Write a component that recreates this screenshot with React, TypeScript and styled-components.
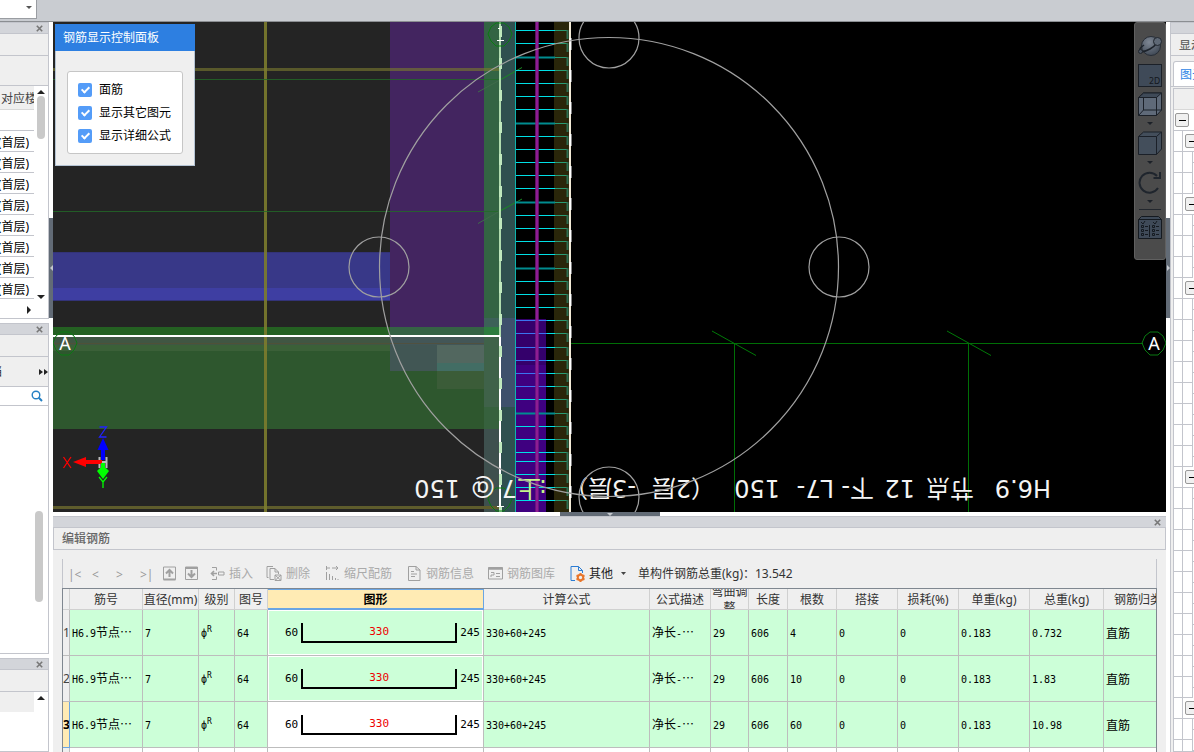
import React from "react";
import styled, { createGlobalStyle, css } from "styled-components";

const Global = createGlobalStyle`
  *, *::before, *::after { box-sizing: border-box; }
  body { margin: 0; background: #fff; }
  body, button, input, select, table {
    font: 12px/16px "Noto Sans", "Noto Sans CJK SC", sans-serif;
    color: #333;
  }
  button { border: 0; background: none; padding: 0; margin: 0; }
`;

/* ---------- frame ---------- */

const Shell = styled.div`
  display: flex;
  flex-direction: column;
  height: 100vh;
  overflow: hidden;
`;
const TopStrip = styled.header`
  flex: none;
  height: 22px;
  background: #c9ccd1;
  border-bottom: 1px solid #8b8e92;
`;
const FloorSelect = styled.select`
  display: block;
  width: 37px;
  height: 19px;
  appearance: none;
  border: 1px solid #9a9da2;
  border-width: 0 1px 1px 0;
  border-radius: 0;
  background: #fff;
`;
const SelectWrap = styled.div`
  position: relative;
  width: 37px;
  &::after {
    content: "";
    position: absolute;
    right: 5px;
    top: 6px;
    border: 3px solid transparent;
    border-top-color: #555;
    border-bottom: 0;
  }
`;
const Body = styled.div`
  flex: 1;
  min-height: 0;
  display: flex;
`;
const LeftDock = styled.aside`
  flex: none;
  width: 49px;
  display: flex;
  flex-direction: column;
  gap: 4px;
`;
const VSplit = styled.div`
  flex: none;
  width: 4px;
  padding-top: 196px;
  background: #fff;
`;
const HSplit = styled.div`
  flex: none;
  height: 4px;
  display: flex;
  justify-content: center;
  background: #fff;
`;
const Grip = styled.button<{ $flat?: boolean }>`
  display: flex;
  align-items: center;
  justify-content: center;
  width: ${(p) => (p.$flat ? "100px" : "4px")};
  height: ${(p) => (p.$flat ? "4px" : "100px")};
  background: #626b76;
`;
const Center = styled.main`
  flex: 1;
  min-width: 0;
  display: flex;
  flex-direction: column;
`;
const RightDock = styled.aside`
  flex: none;
  width: 24px;
  overflow: hidden;
  display: flex;
  flex-direction: column;
  background: #efefef;
  border-left: 1px solid #c3c5cc;
`;

/* ---------- dock panels ---------- */

const Panel = styled.section<{ $h?: number }>`
  display: flex;
  flex-direction: column;
  overflow: hidden;
  ${(p) => (p.$h ? `flex: none; height: ${p.$h}px;` : "flex: 1;")}
  border: 1px solid #c3c5cc;
  border-left: 0;
  border-top: 0;
  background: #fff;
`;
const TitleBar = styled.div`
  flex: none;
  display: flex;
  align-items: center;
  justify-content: flex-end;
  height: 12px;
  padding-right: 4px;
  background: #d3d5da;
  border: 1px solid #c3c5cc;
  border-width: 1px 0;
`;
const Strip = styled.div<{ $h: number }>`
  flex: none;
  display: flex;
  align-items: center;
  justify-content: space-between;
  height: ${(p) => p.$h}px;
  background: #efefef;
  border-bottom: 1px solid #c3c5cc;
  white-space: nowrap;
`;
const Scrolled = styled.span`
  margin-left: -10px;
`;
const Scroller = styled.div`
  flex: 1;
  min-height: 0;
  display: flex;
`;
const List = styled.ul`
  flex: none;
  width: 34px;
  margin: 0;
  padding: 0;
  list-style: none;
  overflow: hidden;
`;
const ListRow = styled.li<{ $head?: boolean }>`
  display: flex;
  justify-content: flex-end;
  align-items: center;
  height: ${(p) => (p.$head ? "24px" : "21px")};
  padding: 3px 5px 0 0;
  border-bottom: 1px solid ${(p) => (p.$head ? "#d8d8d8" : "#c3c5cc")};
  background: ${(p) => (p.$head ? "#efefef" : "#fff")};
  color: ${(p) => (p.$head ? "#444" : "#000")};
  white-space: nowrap;
  overflow: hidden;
  ${(p) => p.$head && "justify-content: flex-start; padding: 3px 0 0 1px;"}
`;
const Track = styled.div`
  flex: 1;
  display: flex;
  flex-direction: column;
  align-items: center;
  padding-top: 4px;
`;
const Thumb = styled.div<{ $h: number }>`
  width: 8px;
  height: ${(p) => p.$h}px;
  margin: 2px 0 auto;
  border-radius: 4px;
  background: #c9c9c9;
`;
const TreeTrack = styled.div`
  flex: 1;
  display: flex;
  justify-content: flex-end;
  padding: 103px 5px 0 0;
`;
const HScroll = styled.div`
  flex: none;
  height: 19px;
  padding: 7px 17px 0 0;
  display: flex;
  justify-content: flex-end;
`;
const SearchBox = styled.label`
  flex: none;
  display: flex;
  align-items: center;
  height: 19px;
  padding-right: 5px;
  border-bottom: 1px solid #c3c5cc;
`;
const SearchInput = styled.input`
  flex: 1;
  min-width: 0;
  width: 0;
  border: 0;
  outline: 0;
`;
const GreyCell = styled.div`
  width: 34px;
  height: 20px;
  background: #efefef;
`;
const CloseButton = styled.button`
  width: 9px;
  height: 9px;
  display: flex;
  align-items: center;
  justify-content: center;
`;

/* ---------- tree at the right ---------- */

const DockCaption = styled.div`
  flex: none;
  height: 22px;
  padding: 4px 0 0 8px;
  border-bottom: 1px solid #c3c5cc;
  color: #666;
  font-weight: 500;
  white-space: nowrap;
`;
const TabRow = styled.div`
  flex: none;
  height: 31px;
  padding: 5px 0 0 2px;
  border-bottom: 1px solid #c3c5cc;
`;
const Tab = styled.button`
  width: 60px;
  height: 25px;
  padding: 2px 0 0 6px;
  text-align: left;
  background: #fff;
  border: 1px solid #c3c5cc;
  border-bottom: 0;
  border-radius: 3px 3px 0 0;
  color: #2e86e6;
`;
const Tree = styled.div`
  flex: 1;
  min-height: 0;
  overflow: hidden;
  margin: 1px 0 0 2px;
  background: #fff;
  border: 1px solid #c3c5cc;
  border-right: 0;
`;
const TreeHead = styled.div`
  height: 21px;
  background: #efefef;
  border-bottom: 1px solid #d8d8d8;
`;
const TreeRow = styled.div`
  display: flex;
  align-items: center;
  height: 21px;
  border-bottom: 1px solid #c3c5cc;
`;
const Gutter = styled.div`
  flex: none;
  width: 9px;
  height: 21px;
  border-right: 1px solid #c3c5cc;
`;
const Leaf = styled.div`
  flex: none;
  width: 4px;
  height: 21px;
  margin-left: 9px;
  border-left: 1px solid #c3c5cc;
  background: linear-gradient(#c3c5cc, #c3c5cc) 0 10px / 100% 1px no-repeat, #fff;
`;
const Toggle = styled.button<{ $root?: boolean }>`
  flex: none;
  width: 14px;
  height: 14px;
  margin-left: ${(p) => (p.$root ? "1px" : "2px")};
  display: flex;
  align-items: center;
  justify-content: center;
  border: 1px solid #999;
  border-radius: 2px;
  background: #f0f0f0;
  &::after {
    content: "";
    width: 7px;
    height: 1px;
    background: #000;
  }
`;

/* ---------- viewport ---------- */

const Viewport = styled.div`
  flex: 1;
  min-height: 0;
  position: relative;
  overflow: hidden;
  background: #000;
`;
const Scene = styled.svg`
  position: absolute;
  inset: 0;
  width: 100%;
  height: 100%;
`;
const FloatPanel = styled.section`
  position: absolute;
  left: 2px;
  top: 2px;
  width: 140px;
  background: #efefef;
  border: 1px solid #b4c3d3;
  border-top: 0;
`;
const FloatTitle = styled.h2`
  margin: 0 -1px;
  padding: 6px 8px 5px;
  background: #2d7fe1;
  color: #fff;
  font-size: 12px;
  line-height: 16px;
  font-weight: 400;
`;
const CheckGroup = styled.div`
  display: flex;
  flex-direction: column;
  gap: 7px;
  margin: 20px 11px 11px;
  padding: 10px 10px 9px;
  background: #fff;
  border: 1px solid #c6c6c6;
  border-radius: 3px;
`;
const CheckLabel = styled.label`
  display: flex;
  align-items: center;
  gap: 7px;
  color: #000;
  white-space: nowrap;
`;
const Check = styled.input`
  appearance: none;
  width: 14px;
  height: 14px;
  margin: 0;
  border-radius: 2px;
  background: #549cf8;
  display: grid;
  place-items: center;
  &:checked::after {
    content: "";
    width: 5px;
    height: 8px;
    margin-bottom: 2px;
    border: solid #fff;
    border-width: 0 2px 2px 0;
    transform: rotate(45deg);
  }
`;
const ViewTools = styled.nav`
  position: absolute;
  right: 0;
  top: 0;
  width: 32px;
  height: 238px;
  padding-top: 11px;
  display: flex;
  flex-direction: column;
  align-items: center;
  background: #4b4b4b;
  border: 1px solid #606060;
  border-radius: 3px;
`;
const ViewTool = styled.button<{ $h: number }>`
  width: 26px;
  height: ${(p) => p.$h}px;
  display: flex;
  flex-direction: column;
  align-items: center;
  gap: 6px;
`;
const ToolRule = styled.hr`
  width: 22px;
  margin: 2px 0 6px;
  border: 0;
  border-top: 1px solid #22272e;
`;

/* ---------- edit panel ---------- */

const EditPanel = styled.section`
  flex: none;
  height: 236px;
  display: flex;
  flex-direction: column;
  overflow: hidden;
  background: #efefef;
`;
const EditCaption = styled.h2`
  flex: none;
  height: 22px;
  margin: 0 0 9px;
  padding: 3px 8px 2px;
  border: 1px solid #c3c5cc;
  border-top: 0;
  font-size: 12px;
  line-height: 16px;
  font-weight: 500;
  color: #666;
`;
const EditBody = styled.div`
  flex: 1;
  min-height: 0;
  display: flex;
  flex-direction: column;
  margin: 0 9px;
`;
const Toolbar = styled.div`
  flex: none;
  display: flex;
  align-items: center;
  height: 29px;
  border: solid #c3c5cc;
  border-width: 0 1px;
  padding-left: 2px;
  white-space: nowrap;
`;
const ToolButton = styled.button<{ $on?: boolean; $w: number }>`
  flex: none;
  width: ${(p) => p.$w}px;
  display: flex;
  align-items: center;
  justify-content: flex-start;
  gap: 4px;
  color: ${(p) => (p.$on ? "#222" : "#aaa")};
`;
const NavButton = styled.button`
  flex: none;
  width: 24px;
  height: 20px;
  padding: 2px 0 0 3px;
  display: flex;
  align-items: center;
  color: #999;
`;
const MoveButton = styled(NavButton)`
  width: 22px;
  padding: 0 0 0 2px;
`;
const ToolGroup = styled.div`
  display: flex;
  align-items: center;
  margin-right: 5px;
`;
const MenuMark = styled.span`
  display: flex;
  margin-left: 4px;
`;
const Total = styled.span`
  margin-left: 1px;
`;
const TableWrap = styled.div`
  flex: 1;
  overflow: hidden;
  background: #fff;
  border: 1px solid #7f8790;
  border-bottom: 0;
`;
const Table = styled.table`
  width: calc(100% + 17px);
  table-layout: fixed;
  border-collapse: separate;
  border-spacing: 0;
`;
const Col = styled.col<{ $w?: number }>`
  width: ${(p) => (p.$w ? `${p.$w}px` : "auto")};
`;
const line = css`
  padding: 0;
  border: solid #bdbdbd;
  border-width: 0 1px 1px 0;
  overflow: hidden;
  white-space: nowrap;
`;
const Th = styled.th<{ $sel?: boolean }>`
  ${line}
  height: 21px;
  font-weight: ${(p) => (p.$sel ? 700 : 400)};
  color: ${(p) => (p.$sel ? "#000" : "#333")};
  background: ${(p) => (p.$sel ? "#ffebb4" : "#efefef")};
  border-color: ${(p) => (p.$sel ? "#6aa5e3" : "#d0d0d0")};
  ${(p) => p.$sel && "border-width: 1px 1px 2px 0;"}
`;
const ThText = styled.div<{ $wrap?: boolean; $sel?: boolean }>`
  height: ${(p) => (p.$sel ? "18px" : "20px")};
  padding-top: 2px;
  display: flex;
  align-items: center;
  justify-content: center;
  white-space: ${(p) => (p.$wrap ? "normal" : "nowrap")};
`;
const RowHead = styled.th<{ $sel?: boolean }>`
  ${line}
  height: 46px;
  font-weight: ${(p) => (p.$sel ? 700 : 400)};
  color: ${(p) => (p.$sel ? "#000" : "#444")};
  background: ${(p) => (p.$sel ? "#ffebb4" : "#efefef")};
  text-align: center;
  border-color: ${(p) => (p.$sel ? "#6aa5e3" : "#bdbdbd")};
`;
const Td = styled.td<{ $plain?: boolean }>`
  ${line}
  height: 46px;
  padding-left: 2px;
  font-family: "Noto Sans CJK SC", sans-serif;
  color: #000;
  background: ${(p) => (p.$plain ? "#fff" : "#ccffd8")};
`;
const FigureTd = styled(Td)`
  padding: 1px;
  background: #fff;
`;
const Figure = styled.div<{ $sel: boolean }>`
  display: flex;
  align-items: center;
  height: 43px;
  padding: 0 2px 0 16px;
  gap: 3px;
  background: ${(p) => (p.$sel ? "#fff" : "#ccffd8")};
  font: 11px/16px "DejaVu Sans Mono", monospace;
`;
const Bend = styled.span`
  flex: 1;
  height: 20px;
  padding-top: 1px;
  text-align: center;
  color: #e00;
  border: solid #000;
  border-width: 0 2px 2px;
`;
const Mono = styled.span`
  font: 10px/16px "DejaVu Sans Mono", monospace;
`;
const Grade = styled.sup`
  font: 8px/8px "DejaVu Sans Mono", monospace;
`;

/* ---------- small drawings ---------- */

const Close = () => (
  <CloseButton aria-label="close">
    <svg width="7" height="7" viewBox="0 0 7 7" stroke="#777" strokeWidth="1.6">
      <path d="M.8 .8L6.2 6.2M6.2 .8L.8 6.2" />
    </svg>
  </CloseButton>
);
const Tri = ({ d, w = 8, h = 4, fill = "#222" }: { d: string; w?: number; h?: number; fill?: string }) => (
  <svg width={w} height={h} viewBox={`0 0 ${w} ${h}`} fill={fill}>
    <path d={d} />
  </svg>
);
const Icon = ({ children, w = 15 }: { children: React.ReactNode; w?: number }) => (
  <svg width={w} height="15" viewBox={`0 0 ${w} 15`} fill="none" stroke="#a0a0a0" strokeWidth="1">
    {children}
  </svg>
);
const Down = () => <Tri d="M0 0H6L3 3Z" w={6} h={3} fill="#1c2128" />;

const rungs = [
  30, 43, 57, 70, 83, 96, 109, 123, 136, 149, 162, 175, 188, 202, 215, 228, 241, 254, 268, 281, 294, 307, 320, 333,
  347, 360, 373, 386, 399, 413, 426, 439, 452, 461, 474, 487, 500,
];
const dimRungs = [57, 123, 202, 268, 413];
const rungColour = (y: number) =>
  dimRungs.includes(y) ? "#008c90" : y > 319 && y < 390 ? "#3b74f0" : "#00e0e6";

const caption: [string, number][] = [
  ["H6.9", 1051],
  ["节点", 974],
  ["12", 915],
  ["下-", 874],
  ["L7-", 834],
  ["150", 780],
  ["（2层", 715],
  ["-3层）", 636],
  [":", 547],
  ["上", 541],
  ["7", 517],
  ["@", 495],
  ["150", 460],
];
const Bubble = ({ x, y }: { x: number; y: number }) => (
  <path
    d={`M${x - 4} ${y - 11}H${x + 4}L${x + 9} ${y - 7}L${x + 12} ${y}L${x + 9} ${y + 7}L${x + 4} ${y + 12}H${x - 4}L${
      x - 9
    } ${y + 7}L${x - 12} ${y}L${x - 9} ${y - 7}Z`}
    fill="none"
    stroke="#0a7a12"
  />
);

const Drawing = () => (
  <Scene viewBox="53 22 1113 490" preserveAspectRatio="xMinYMin slice">
    <rect x="53" y="22" width="447" height="490" fill="#242424" />
    <rect x="53" y="252" width="337" height="36" fill="#383888" />
    <rect x="53" y="288" width="337" height="12" fill="#3e3ea2" />
    <path d="M53 252.500H390M53 300.500H390" stroke="#333378" />
    <rect x="390" y="22" width="94" height="305" fill="#432560" />
    <rect x="53" y="327" width="447" height="9" fill="#246022" />
    <rect x="390" y="327" width="94" height="9" fill="#356245" />
    <rect x="53" y="337" width="431" height="92" fill="#2e572e" />
    <rect x="53" y="337" width="337" height="14" fill="#3b6038" />
    <rect x="53" y="337" width="431" height="8" fill="#405643" />
    <rect x="390" y="337" width="94" height="34" fill="#44565a" opacity=".85" />
    <rect x="437" y="345" width="47" height="18" fill="#52675f" />
    <rect x="437" y="363" width="47" height="8" fill="#426d64" />
    <rect x="437" y="371" width="47" height="18" fill="#3b5c38" />
    <path d="M53 343.500H500" stroke="#5a4f32" opacity=".6" />
    <rect x="484" y="22" width="16" height="296" fill="#336443" />
    <rect x="484" y="318" width="16" height="9" fill="#3c6158" />
    <rect x="484" y="327" width="16" height="9" fill="#2d7c3f" />
    <rect x="484" y="337" width="16" height="70" fill="#3f6249" />
    <rect x="484" y="407" width="16" height="22" fill="#36613d" />
    <rect x="484" y="429" width="16" height="83" fill="#3e504e" />
    <rect x="500" y="22" width="16" height="490" fill="#2f504f" />
    <rect x="500" y="318" width="16" height="89" fill="#3e506c" />
    <rect x="53" y="68" width="447" height="3" fill="#77772f" opacity=".65" />
    <rect x="53" y="506" width="447" height="3" fill="#5e5c2c" />
    <rect x="264" y="22" width="3" height="490" fill="#7c7c2d" opacity=".9" />
    <path d="M53 79.500H500M53 211.500H500" stroke="#226b27" opacity=".8" />
    <path d="M478 92L500 80M478 223.500L500 211" stroke="#3f6b4a" />
    <path d="M500 80L522 67.500M500 211L522 199" stroke="#1a8a22" />
    <rect x="516" y="319" width="30" height="46" fill="#34006b" />
    <rect x="516" y="365" width="30" height="147" fill="#3f0080" />
    <rect x="554" y="22" width="16" height="490" fill="#2a260a" />
    {rungs.map((y) => (
      <g key={y} fill="none">
        <path d={`M516 ${y}.500H555`} stroke={rungColour(y)} strokeWidth={dimRungs.includes(y) ? 2 : 1} />
        {y > 319 && y < 410 && <path d={`M547 ${y}.500H555`} stroke="#00e5e9" />}
        <path d={`M555 ${y}.500H567.500`} stroke="#2a9a72" />
        <path d={`M567.500 ${y}V${y + 9}`} stroke="#2c6e50" strokeWidth="2" />
      </g>
    ))}
    <rect x="535" y="22" width="4" height="490" fill="#7a1a80" opacity=".75" />
    <rect x="536" y="22" width="2" height="490" fill="#8e1c94" />
    <path d="M515.500 22V512" stroke="#0fb3ac" />
    <rect x="499" y="22" width="2" height="315" fill="#b0dcae" />
    <rect x="499" y="337" width="2" height="175" fill="#fff" />
    <path d="M500.500 26V512" stroke="#bfe8bd" strokeWidth="3" strokeDasharray="11 21" />
    <rect x="53" y="335" width="447" height="2" fill="#fff" />
    <path d="M570 22V512" stroke="#f2ead6" strokeWidth="2" />
    <path d="M570.500 38V512" stroke="#fff" strokeWidth="2" strokeDasharray="12 20" />
    <path d="M571 343.500H1143M734.500 343V512M968.500 343V512" stroke="#006e06" />
    <path d="M712 331L756 355.500M947 331L991 355.500" stroke="#007a08" />
    <Bubble x={65} y={343} />
    <Bubble x={1154} y={343} />
    <Bubble x={500} y={34} />
    <Bubble x={500} y={499} />
    <path d="M497 40.500H504M497 506.500H504M498 28.500H500" stroke="#fff" />
    <g fill="#fff" fontFamily="Noto Sans, sans-serif" fontSize="18" textAnchor="middle">
      <text x="65" y="350">A</text>
      <text x="1154" y="350">A</text>
    </g>
    <g fill="#f4f4f4" fontFamily="DejaVu Sans, Noto Sans CJK SC, sans-serif" fontSize="24">
      {caption.map(([t, x]) => (
        <text key={x} transform={`translate(${x} 480) rotate(180)`} fill={t === "上" || t === ":" ? "#c5f58a" : undefined}>
          {t}
        </text>
      ))}
    </g>
    <g fill="none" stroke="#a0a0a0" strokeWidth="1.200">
      <circle cx="609" cy="267" r="229.500" />
      <circle cx="609" cy="38" r="30" />
      <circle cx="609" cy="497" r="30" />
      <circle cx="379" cy="267" r="30" />
      <circle cx="839" cy="267" r="30" />
    </g>
    <path d="M99.500 457V468M106.500 457V468M99 462H107" stroke="#bbb" strokeWidth="2" />
    <path d="M103 460V448" stroke="#00f" strokeWidth="4" />
    <path d="M103 438L108.500 450H97.500Z" fill="#00f" />
    <path d="M102 462H86" stroke="#f00" strokeWidth="4" />
    <path d="M73 462L86 457V467Z" fill="#f00" />
    <path d="M103 463V470" stroke="#0f0" strokeWidth="4" />
    <path d="M97 471L100 468H106L109 471L103 479Z" fill="#0f0" />
    <g fill="none" strokeWidth="1.300">
      <path d="M99.500 427H106.500L99.500 437H106.500" stroke="#22f" />
      <path d="M63.500 457L71 468M71 457L63.500 468" stroke="#f00" />
      <path d="M99 477L103 482L107 477M103 482V488" stroke="#0f0" />
    </g>
  </Scene>
);

const ViewToolbar = () => (
  <ViewTools aria-label="view">
    <ViewTool $h={30} aria-label="orbit">
      <svg width="26" height="24" viewBox="0 0 26 24">
        <defs>
          <radialGradient id="ball" cx=".4" cy=".3" r=".8">
            <stop offset="0" stopColor="#7e8794" />
            <stop offset="1" stopColor="#39424e" />
          </radialGradient>
        </defs>
        <circle cx="14" cy="12" r="9.500" fill="url(#ball)" stroke="#272d36" />
        <path d="M3 18C10 18 17 13 20 9M3 18C2 16 4 13 7 11M20 9" fill="none" stroke="#1d232b" strokeWidth="1.500" />
        <circle cx="20.500" cy="7.500" r="4" fill="#5e6875" stroke="#20262e" />
        <circle cx="3.500" cy="17.500" r="2" fill="#4b5562" stroke="#20262e" />
      </svg>
    </ViewTool>
    <ViewTool $h={28} aria-label="2D">
      <svg width="24" height="23" viewBox="0 0 24 23">
        <rect x=".5" y=".5" width="23" height="22" fill="#3f4a58" stroke="#1b2028" />
        <text x="11" y="20" fontSize="8" fontFamily="DejaVu Sans, sans-serif" fill="#14181e">
          2D
        </text>
      </svg>
    </ViewTool>
    <ViewTool $h={39} aria-label="wireframe">
      <svg width="24" height="24" viewBox="0 0 24 24" stroke="#1b2028" strokeLinejoin="round">
        <path d="M.5 5.500L5.500 1H23.500V18L18.500 23.500H.5Z" fill="#5f6a79" />
        <path d="M.5 5.500L5.500 1H23.500L18.500 5.500Z" fill="#3f4a58" />
        <path d="M5.500 5.500V18H18.500M.5 23.500L5.500 18M18.500 18H23.500M18.500 5.500V23.500M.5 5.500H18.500" fill="none" />
      </svg>
      <Down />
    </ViewTool>
    <ViewTool $h={39} aria-label="solid">
      <svg width="24" height="24" viewBox="0 0 24 24" stroke="#1b2028" strokeLinejoin="round">
        <path d="M.5 5.500L5.500 1H23.500V18L18.500 23.500H.5Z" fill="#434e5b" />
        <path d="M.5 5.500H18.500L23.500 1M18.500 5.500V23.500" fill="none" />
      </svg>
      <Down />
    </ViewTool>
    <ViewTool $h={37} aria-label="rotate">
      <svg width="24" height="24" viewBox="0 0 24 24" fill="none" stroke="#1f252d" strokeWidth="2">
        <path d="M20 18A10 10 0 1 1 19 6" />
        <path d="M22 2V8H15.500" />
      </svg>
      <Down />
    </ViewTool>
    <ToolRule />
    <ViewTool $h={28} aria-label="display settings">
      <svg width="24" height="24" viewBox="0 0 24 24" fill="none" stroke="#151a20">
        <path d="M.5 3.500L3.500 .5H20.500L23.500 3.500V22.500H.5Z" fill="#3f4a58" />
        <path d="M.5 3.500H23.500M11.500 9V21M3 6L5 8L7 5M15 6L17 8L19 5" />
        {[9.5, 13.5, 17.5].map((y) => (
          <path key={y} d={`M3.500 ${y}h2v2h-2zM7 ${y + 1}h3M14.500 ${y}h2v2h-2zM18 ${y + 1}h3`} />
        ))}
      </svg>
    </ViewTool>
  </ViewTools>
);

/* ---------- data ---------- */

/* A cell's digits and Latin letters are set smaller than its Chinese. */
const Mixed = ({ text }: { text: string }) => (
  <>
    {text.split(/([\x20-\x7e]+)/).map((part, i) => (i % 2 ? <Mono key={i}>{part}</Mono> : part))}
  </>
);

const columns: [string, number | undefined][] = [
  ["筋号", 73],
  ["直径(mm)", 56],
  ["级别", 36],
  ["图号", 33],
  ["图形", 216],
  ["计算公式", undefined],
  ["公式描述", 61],
  ["弯曲调整", 38],
  ["长度", 39],
  ["根数", 49],
  ["搭接", 61],
  ["损耗(%)", 61],
  ["单重(kg)", 71],
  ["总重(kg)", 74],
  ["钢筋归类", 69],
];
const bars = [
  { count: "4", total: "0.732" },
  { count: "10", total: "1.83" },
  { count: "60", total: "10.98" },
];
const leaves = [2, 3, 8, 10, 2];

export default function App() {
  return (
    <Shell>
      <Global />
      <TopStrip>
        <SelectWrap>
          <FloorSelect aria-label="floor" />
        </SelectWrap>
      </TopStrip>
      <Body>
        <LeftDock>
          <Panel $h={297}>
            <TitleBar>
              <Close />
            </TitleBar>
            <Strip $h={22} />
            <Strip $h={30} />
            <Scroller>
              <List>
                <ListRow $head>对应楼层</ListRow>
                <ListRow />
                {Array.from({ length: 8 }, (_, i) => (
                  <ListRow key={i}>(首层)</ListRow>
                ))}
              </List>
              <Track>
                <Tri d="M0 4L4 0L8 4Z" />
                <Thumb $h={43} />
                <Tri d="M0 0H8L4 4Z" />
              </Track>
            </Scroller>
            <HScroll>
              <Tri d="M0 0L4 4L0 8Z" w={4} h={8} />
            </HScroll>
          </Panel>
          <Panel $h={331}>
            <TitleBar>
              <Close />
            </TitleBar>
            <Strip $h={22} />
            <Strip $h={30}>
              <Scrolled>档</Scrolled>
              <Tri d="M0 0L4 3L0 6ZM5 0L9 3L5 6Z" w={9} h={6} />
            </Strip>
            <SearchBox>
              <SearchInput aria-label="search" />
              <svg width="12" height="12" viewBox="0 0 12 12" fill="none" stroke="#2580c3" strokeWidth="1.400">
                <circle cx="5" cy="5" r="3.800" />
                <path d="M7.800 7.800L11 11" strokeWidth="2" />
              </svg>
            </SearchBox>
            <TreeTrack>
              <Thumb $h={91} />
            </TreeTrack>
          </Panel>
          <Panel>
            <TitleBar>
              <Close />
            </TitleBar>
            <Strip $h={22} />
            <Scroller>
              <GreyCell />
              <Track>
                <Tri d="M0 4L4 0L8 4Z" />
              </Track>
            </Scroller>
          </Panel>
        </LeftDock>
        <VSplit>
          <Grip aria-label="collapse left">
            <Tri d="M3 0V6L0 3Z" w={3} h={6} fill="#c4c8cd" />
          </Grip>
        </VSplit>
        <Center>
          <Viewport>
            <Drawing />
            <FloatPanel>
              <FloatTitle>钢筋显示控制面板</FloatTitle>
              <CheckGroup>
                {["面筋", "显示其它图元", "显示详细公式"].map((t) => (
                  <CheckLabel key={t}>
                    <Check type="checkbox" defaultChecked />
                    {t}
                  </CheckLabel>
                ))}
              </CheckGroup>
            </FloatPanel>
            <ViewToolbar />
          </Viewport>
          <HSplit>
            <Grip $flat aria-label="collapse bottom">
              <Tri d="M0 0H6L3 3Z" w={6} h={3} fill="#c4c8cd" />
            </Grip>
          </HSplit>
          <EditPanel>
            <TitleBar>
              <Close />
            </TitleBar>
            <EditCaption>编辑钢筋</EditCaption>
            <EditBody>
              <Toolbar>
                <ToolGroup>
                  <NavButton>|&lt;</NavButton>
                  <NavButton>&lt;</NavButton>
                  <NavButton>&gt;</NavButton>
                  <NavButton>&gt;|</NavButton>
                  <MoveButton aria-label="move up">
                    <Icon w={13}>
                      <path d="M.5 1H12.500V13.500H.5Z" />
                      <path d="M.5 13.500H12.500M6.500 11V4M3 7.500L6.500 4L10 7.500" strokeWidth="2" />
                    </Icon>
                  </MoveButton>
                  <MoveButton aria-label="move down">
                    <Icon w={13}>
                      <path d="M.5 1H12.500V13.500H.5Z" />
                      <path d="M.5 2H12.500M6.500 4V11M3 7.500L6.500 11L10 7.500" strokeWidth="2" />
                    </Icon>
                  </MoveButton>
                </ToolGroup>
                <ToolButton $w={56}>
                  <Icon>
                    <path d="M2 1.500H6.500V4.500M2 13.500H6.500V10.500M8.500 6H14V9H8.500Z" />
                    <path d="M7 7.500H2M4 5L1.500 7.500L4 10" strokeWidth="1.600" />
                  </Icon>
                  插入
                </ToolButton>
                <ToolButton $w={59}>
                  <Icon w={16}>
                    <path d="M2.500 11.500H1V.5H7M4 2.500H9L12.500 6V8M4 2.500V13.500H8M9 2.500V6H12.500" />
                    <path d="M9 9H15V14.500H9ZM9 9L15 14.500M15 9L9 14.500" />
                  </Icon>
                  删除
                </ToolButton>
                <ToolButton $w={82}>
                  <Icon>
                    <path d="M1.500 0V4M1.500 6V14M2 2H5M7 2H12M11 0L13 2L11 4M4.500 8V14M7.500 10V14M10.500 12V14M13 13V14" />
                  </Icon>
                  缩尺配筋
                </ToolButton>
                <ToolButton $w={81}>
                  <Icon>
                    <path d="M1.500 .5H9L13 4V14.500H1.500ZM9 .5V4H13M4 5.500H7M4 8H10M4 10.500H8" />
                  </Icon>
                  钢筋信息
                </ToolButton>
                <ToolButton $w={82}>
                  <Icon>
                    <path d="M.5 1.500H14.500V13H.5Z" />
                    <path d="M.5 2.500H14.500" strokeWidth="2.500" />
                    <path d="M3 6.500H6V9H3V11M8 7.500H12M8 10.500H12" />
                  </Icon>
                  钢筋图库
                </ToolButton>
                <ToolButton $w={67} $on>
                  <svg width="15" height="16" viewBox="0 0 15 16" fill="none">
                    <path d="M5 14.500H1V.5H8.500L12.500 4.500V7M8.500 .5V4.500H12.500" stroke="#2b7cd3" />
                    <circle cx="10.500" cy="11.500" r="2.700" stroke="#e8762c" strokeWidth="2" />
                    <path
                      d="M10.500 7V9M10.500 14V16M6.500 9.300L8 10.200M13 12.800L14.500 13.700M6.500 13.700L8 12.800M13 10.200L14.500 9.300"
                      stroke="#e8762c"
                      strokeWidth="2"
                    />
                  </svg>
                  其他
                  <MenuMark>
                    <Tri d="M0 0H5L2.500 3Z" w={5} h={3} fill="#444" />
                  </MenuMark>
                </ToolButton>
                <Total>单构件钢筋总重(kg)：13.542</Total>
              </Toolbar>
              <TableWrap>
                <Table>
                  <colgroup>
                    <Col $w={7} />
                    {columns.map(([name, w]) => (
                      <Col key={name} $w={w} />
                    ))}
                  </colgroup>
                  <thead>
                    <tr>
                      <Th aria-label="row" />
                      {columns.map(([name]) => (
                        <Th key={name} $sel={name === "图形"} scope="col">
                          <ThText $wrap={name === "弯曲调整"} $sel={name === "图形"}>
                            {name}
                          </ThText>
                        </Th>
                      ))}
                    </tr>
                  </thead>
                  <tbody>
                    {bars.map((bar, i) => (
                      <tr key={i}>
                        <RowHead scope="row" $sel={i === 2}>
                          {i + 1}
                        </RowHead>
                        <Td>
                          <Mixed text="H6.9节点…" />
                        </Td>
                        <Td>
                          <Mixed text="7" />
                        </Td>
                        <Td>
                          <Mono>ф</Mono>
                          <Grade>R</Grade>
                        </Td>
                        <Td>
                          <Mixed text="64" />
                        </Td>
                        <FigureTd>
                          <Figure $sel={i === 2}>
                            60<Bend>330</Bend>245
                          </Figure>
                        </FigureTd>
                        {["330+60+245", "净长-…", "29", "606", bar.count, "0", "0", "0.183", bar.total, "直筋"].map(
                          (t, k) => (
                            <Td key={k}>
                              <Mixed text={t} />
                            </Td>
                          )
                        )}
                      </tr>
                    ))}
                    <tr>
                      <RowHead />
                      {columns.map(([name]) => (
                        <Td key={name} $plain />
                      ))}
                    </tr>
                  </tbody>
                </Table>
              </TableWrap>
            </EditBody>
          </EditPanel>
        </Center>
        <VSplit>
          <Grip aria-label="collapse right">
            <Tri d="M0 0V6L3 3Z" w={3} h={6} fill="#c4c8cd" />
          </Grip>
        </VSplit>
        <RightDock>
          <TitleBar />
          <DockCaption>显示</DockCaption>
          <TabRow>
            <Tab>图元</Tab>
          </TabRow>
          <Tree>
            <TreeHead />
            <TreeRow>
              <Toggle $root aria-label="collapse" />
            </TreeRow>
            {leaves.map((n, i) => (
              <React.Fragment key={i}>
                <TreeRow>
                  <Gutter />
                  <Toggle aria-label="collapse" />
                </TreeRow>
                {Array.from({ length: n }, (_, k) => (
                  <TreeRow key={k}>
                    <Gutter />
                    <Leaf />
                  </TreeRow>
                ))}
              </React.Fragment>
            ))}
          </Tree>
        </RightDock>
      </Body>
    </Shell>
  );
}
